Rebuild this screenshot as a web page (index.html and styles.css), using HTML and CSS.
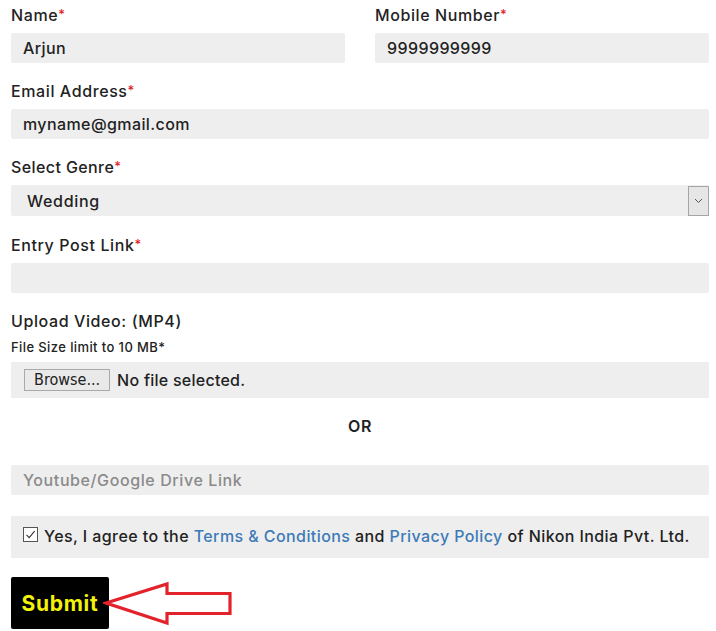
FILE: index.html
```html
<!DOCTYPE html>
<html lang="en">
<head>
    <meta charset="utf-8" />
    <meta name="viewport" content="width=device-width, initial-scale=1" />
    <title>Entry form</title>
    <link rel="stylesheet" href="styles.css">
</head>
<body>

    <form class="form">
        <div class="row">
            <div class="group">
                <label class="label">Name<span class="req">*</span></label>
                <input class="field" type="text" value="Arjun">
            </div>
            <div class="group">
                <label class="label">Mobile Number<span class="req">*</span></label>
                <input class="field" type="text" value="9999999999">
            </div>
        </div>

        <div class="group">
            <label class="label">Email Address<span class="req">*</span></label>
            <input class="field" type="text" value="myname@gmail.com">
        </div>

        <div class="group group--select">
            <label class="label label--narrow">Select Genre<span class="req">*</span></label>
            <div class="select">
                <span class="select__value">Wedding</span>
                <span class="select__btn">
                    <svg width="9" height="6" viewBox="0 0 9 6"><path d="M1 1 L4.5 4.5 L8 1" fill="none" stroke="#555" stroke-width="1"/></svg>
                </span>
            </div>
        </div>

        <div class="group">
            <label class="label">Entry Post Link<span class="req">*</span></label>
            <input class="field" type="text" value="">
        </div>

        <div class="group group--upload">
            <label class="label">Upload Video: (MP4)</label>
            <p class="note">File Size limit to 10 MB*</p>
            <div class="file">
                <span class="file__btn">Browse...</span>
                <span class="file__name">No file selected.</span>
            </div>
        </div>

        <p class="or">OR</p>

        <input class="field field--link" type="text" placeholder="Youtube/Google Drive Link">

        <div class="agree">
            <span class="check">
                <svg width="13" height="13" viewBox="0 0 13 13"><path d="M2.5 6.8 L5.2 9.6 L10.6 3.2" fill="none" stroke="#333" stroke-width="1.1"/></svg>
            </span>
            <span class="agree__text">Yes, I agree to the <a href="#">Terms &amp; Conditions</a> and <a href="#">Privacy Policy</a> of Nikon India Pvt. Ltd.</span>
        </div>

        <div class="actions">
            <button class="submit" type="button">Submit</button>
            <svg class="arrow" width="132" height="52" viewBox="0 0 132 52">
                <polygon points="3,26 64,7 64,16.5 127,16.5 127,36.5 64,36.5 64,46" fill="#fff" stroke="#e3232b" stroke-width="3.2" stroke-linejoin="miter"/>
            </svg>
        </div>
    </form>

</body>
</html>
```

FILE: styles.css
```css
* {
    box-sizing: border-box; margin: 0; padding: 0;
}
body {
    font-family: Inter, "Noto Sans", sans-serif; color: #222; background: #fff;
}
.form {
    width: 698px; margin-left: 11px; padding-top: 5px;
}
.row {
    display: flex; gap: 30px;
}
.row .group {
    flex: 1;
}
.group {
    display: flex; flex-direction: column; margin-bottom: 18px;
}
.label {
    display: block; height: 20px; font-size: 16px; line-height: 20px; font-weight: 500; margin-bottom: 8px; letter-spacing: 0.6px;
}
.label--narrow {
    letter-spacing: 0.4px;
}
.req {
    position: relative; top: -2px; color: #e31b23; font-size: 13px; line-height: 0;
}
.field {
    display: block; width: 100%; height: 30px; border: 0; border-radius: 2px; background: #eee;
    padding: 0 12px; font-family: inherit; font-size: 16px; font-weight: 500; color: #222; outline: none; letter-spacing: 0.4px;
}
.field::placeholder {
    color: #8a8a8a; letter-spacing: 0.6px;
}
.group--select {
    margin-bottom: 19px;
}
.select {
    display: flex; align-items: center; height: 31px; background: #eee; border-radius: 2px;
}
.select__value {
    flex: 1; padding-left: 16px; font-size: 16px; font-weight: 500; letter-spacing: 0.7px;
}
.select__btn {
    display: flex; align-items: center; justify-content: center;
    width: 21px; height: 30px; border: 1px solid #a5a5a5; background: #e6e6e6;
}
.group--upload .label {
    margin-bottom: 0;
}
.note {
    font-size: 13px; line-height: 16px; font-weight: 500; margin-top: 8px; margin-bottom: 7px; letter-spacing: 0.4px;
}
.file {
    display: flex; align-items: center; gap: 7px; height: 36px; padding: 0 13px; background: #eee;
}
.file__btn {
    display: block; height: 22px; padding: 0 9px; border: 1px solid #a9a9a9; background: #e9e9e9;
    font-family: "DejaVu Sans Condensed", "Liberation Sans", sans-serif; font-size: 16px; line-height: 20px; color: #222;
}
.file__name {
    font-size: 16px; font-weight: 500; letter-spacing: 0.25px;
}
.or {
    text-align: center; font-size: 16px; line-height: 20px; font-weight: 600; margin-top: 17px; margin-bottom: 29px; letter-spacing: 0.6px;
}
.field--link {
    margin-bottom: 21px;
}
.agree {
    display: flex; align-items: center; gap: 6px; height: 42px; padding: 0 12px 3px; background: #eee;
}
.check {
    display: flex; align-items: center; justify-content: center;
    width: 15px; height: 15px; border: 1px solid #555; background: #fff; margin-top: -2px;
}
.agree__text {
    font-size: 16px; font-weight: 500; letter-spacing: 0.42px;
}
.agree__text a {
    color: #3d7ab8; text-decoration: none;
}
.actions {
    display: flex; align-items: center; margin-top: 19px;
}
.submit {
    width: 98px; height: 52px; border: 0; border-radius: 2px; background: #000; color: #f2f20a;
    font-family: inherit; font-size: 21px; font-weight: 700; letter-spacing: 0.7px;
}
.arrow {
    display: block; margin-left: -6px;
}
```
